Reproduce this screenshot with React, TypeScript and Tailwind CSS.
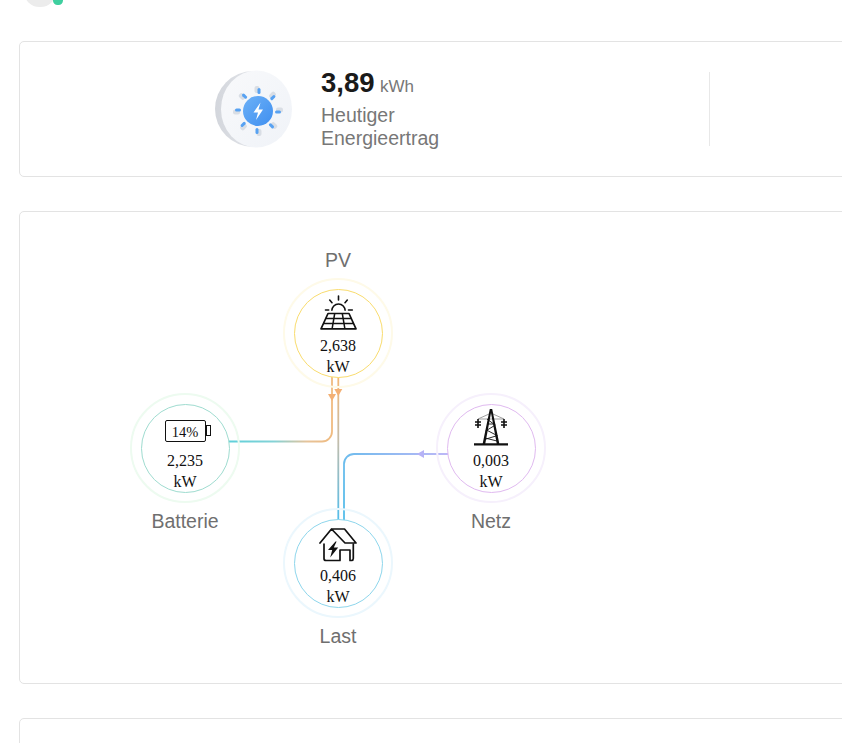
import React from "react";

function SolarIcon() {
  return (
    <svg width="37" height="35" viewBox="0 0 37 35" fill="none" stroke="#111" strokeWidth="1.6" className="block mt-[4px]">
      <path d="M18.5 1v4M9.7 5l2.3 2.7M27.3 5L25 7.7M5.5 15h3.2M28.5 15h3.8" strokeLinecap="round" />
      <path d="M11.8 15.7a6.7 6.7 0 0 1 13.4 0" />
      <path d="M8 18.5h21l7 15.3H1Z" strokeLinejoin="round" strokeWidth="1.7" />
      <path d="M5.6 23.5h25.8M3.4 28.5h30.2M14.7 18.5l-2.6 15.3M22.3 18.5l2.6 15.3" strokeWidth="1.5" />
    </svg>
  );
}

function TowerIcon() {
  return (
    <svg width="37" height="38" viewBox="0 0 37 38" fill="none" stroke="#111" className="block mt-[2px]">
      <path d="M5 11L16 6M31 11L20 6M5 11h26" strokeWidth="0.8" stroke="#888" />
      <path d="M16.8 1h2.4l7.2 35h-2.6L18 5 12.2 36H9.6Z" fill="#111" stroke="none" />
      <path d="M1 36.4h34" strokeWidth="2.4" />
      <path d="M2 14h6M28 14h6M2 17h6M28 17h6M5 11v9M31 11v9" strokeWidth="1.6" />
      <path d="M14.5 16h7.5M13.5 22l9.5 5M22.5 17l-10 6M11.5 31.5l13-4M14 11l8 6M12 30l12 3" strokeWidth="0.9" />
    </svg>
  );
}

function HouseIcon() {
  return (
    <svg width="38" height="36" viewBox="0 0 38 36" fill="none" stroke="#111" strokeWidth="1.7" strokeLinejoin="round" strokeLinecap="round" className="block mt-[6px]">
      <path d="M1 16L12.5 2H25.5L37 16H26L12.5 2" />
      <path d="M5 17V31.5a2 2 0 0 0 2 2H21V23h10v10.5h1.5a2 2 0 0 0 1.8-2V17" />
      <path d="M16.5 14.5l-7.5 8.5h4.2l-2 7.5 8-10h-4.4l2.8-6Z" fill="#111" stroke="none" />
    </svg>
  );
}

function SunDisc() {
  const angles = [0, 45, 90, 135, 180, 225, 270, 315];
  return (
    <svg width="80" height="82" viewBox="0 0 80 82" className="block">
      <defs>
        <linearGradient id="discEdge" x1="0" y1="0" x2="1" y2="0">
          <stop offset="0" stopColor="#d3d6dc" />
          <stop offset="1" stopColor="#eef0f4" />
        </linearGradient>
        <linearGradient id="disc" x1="0" y1="0" x2="1" y2="1">
          <stop offset="0" stopColor="#f8f9fb" />
          <stop offset="1" stopColor="#f0f3f8" />
        </linearGradient>
        <linearGradient id="core" x1="0" y1="0" x2="1" y2="1">
          <stop offset="0" stopColor="#6db1f7" />
          <stop offset="1" stopColor="#3f8ff0" />
        </linearGradient>
        <filter id="soft" x="-20%" y="-20%" width="140%" height="140%">
          <feGaussianBlur stdDeviation="0.5" />
        </filter>
      </defs>
      <ellipse cx="40" cy="41" rx="38" ry="38" fill="url(#discEdge)" filter="url(#soft)" />
      <ellipse cx="43.5" cy="41" rx="35.5" ry="38.5" fill="url(#disc)" filter="url(#soft)" />
      <g filter="url(#soft)">
        {angles.map((a) => (
          <g key={a} transform={`rotate(${a} 45 43)`}>
            <rect x="41.5" y="18" width="5" height="7" rx="2" fill="#d9dee5" />
            <rect x="44.5" y="20" width="3" height="6" rx="1.5" fill="#58a2f2" />
          </g>
        ))}
      </g>
      <circle cx="45" cy="43" r="15" fill="url(#core)" />
      <path d="M47.5 34.5l-7 10h4.5l-2 7.5 7-10.5h-4.5Z" fill="#fff" />
    </svg>
  );
}

function Node({ x, y, outer, inner, icon, value, label, labelTop }: {
  x: number; y: number; outer: string; inner: string; icon: React.ReactNode; value: string; label: string; labelTop?: boolean;
}) {
  return (
    <div className="absolute" style={{ left: x, top: y }}>
      <div className={`w-[110px] h-[110px] rounded-full border-[2px] flex items-center justify-center ${outer}`}>
        <div className={`w-[89px] h-[89px] rounded-full border flex flex-col items-center justify-start bg-white ${inner}`}>
          <div className="h-[47px] mt-[1px] flex items-start justify-center">{icon}</div>
          <div className="font-['Liberation_Serif',serif] text-[16px] leading-[21px] text-[#111] text-center">
            {value}
            <br />
            kW
          </div>
        </div>
      </div>
      <div className={`absolute left-0 w-[110px] text-center text-[19.5px] leading-[24px] text-[#6f6f6f] ${labelTop ? "-top-[30px]" : "top-[116px]"}`}>
        {label}
      </div>
    </div>
  );
}

export default function App() {
  return (
    <div className="relative w-[842px] h-[743px] overflow-hidden bg-white font-['Liberation_Sans',Arial,sans-serif]">
      <div className="absolute left-[24px] -top-[24px] w-[32px] h-[31px] rounded-full bg-[#ececec]" />
      <div className="absolute left-[53px] -top-[4px] w-[10px] h-[9px] rounded-full bg-[#3fcf9f]" />

      <div className="flex flex-col gap-[34px] pl-[19px] pt-[41px] w-[1100px]">
        <section className="h-[136px] rounded-[5px] border border-[#e3e3e3] flex items-center">
          <div className="w-[690px] h-[74px] border-r border-[#e8e8e8] flex items-center pl-[193px] gap-[28px]">
            <SunDisc />
            <div className="w-[130px] -mt-[1px]">
              <div className="flex items-baseline gap-[5.5px] leading-[32px]">
                <span className="text-[27.5px] font-bold text-[#1a1a1a]">3,89</span>
                <span className="text-[17px] text-[#777]">kWh</span>
              </div>
              <div className="text-[19.5px] leading-[23px] text-[#777] mt-[1px]">
                Heutiger
                <br />
                Energieertrag
              </div>
            </div>
          </div>
        </section>

        <section className="relative h-[473px] rounded-[5px] border border-[#e3e3e3]">
          <svg className="absolute left-0 top-0" width="600" height="470" fill="none">
            <defs>
              <linearGradient id="l1" gradientUnits="userSpaceOnUse" x1="320" y1="190" x2="210" y2="190">
                <stop offset="0" stopColor="#f3b877" />
                <stop offset="0.3" stopColor="#e6c39a" />
                <stop offset="0.6" stopColor="#84d2d6" />
                <stop offset="1" stopColor="#5fd0da" />
              </linearGradient>
              <linearGradient id="l2" gradientUnits="userSpaceOnUse" x1="318" y1="166" x2="318" y2="306">
                <stop offset="0" stopColor="#f3b877" />
                <stop offset="0.45" stopColor="#c4bdab" />
                <stop offset="1" stopColor="#55bdea" />
              </linearGradient>
              <linearGradient id="l3" gradientUnits="userSpaceOnUse" x1="427" y1="242" x2="324" y2="300">
                <stop offset="0" stopColor="#bdb8f7" />
                <stop offset="1" stopColor="#55bdea" />
              </linearGradient>
            </defs>
            <path d="M312 160V219.5a10 10 0 0 1-10 10H200" stroke="url(#l1)" strokeWidth="1.8" />
            <path d="M318.3 160V310" stroke="url(#l2)" strokeWidth="1.8" />
            <path d="M435 242H334a10 10 0 0 0-10 10V310" stroke="url(#l3)" strokeWidth="1.8" />
            <path d="M308 182l4 7 4-7Z" fill="#f3b074" />
            <path d="M314.3 177l4 7 4-7Z" fill="#f3b074" />
            <path d="M397 242l7-4v8Z" fill="#b6b2f6" />
          </svg>

          <Node x={263} y={66} outer="border-[#fefae8]" inner="border-[#f9dc6e]" label="PV" labelTop value="2,638" icon={<SolarIcon />} />
          <Node x={110} y={181} outer="border-[#edfbf0]" inner="border-[#9fdcd0]" label="Batterie" value="2,235"
            icon={
              <div className="relative mt-[14px]">
                <div className="w-[41px] h-[22px] rounded-[2px] border border-[#111] text-center font-['Liberation_Serif',serif] text-[14.5px] leading-[22px] text-[#111]">14%</div>
                <div className="absolute -right-[5px] top-[5px] w-[5px] h-[11px] border border-[#111]" />
              </div>
            } />
          <Node x={416} y={181} outer="border-[#f6f0fc]" inner="border-[#e0baf0]" label="Netz" value="0,003" icon={<TowerIcon />} />
          <Node x={263} y={296} outer="border-[#ebf7fd]" inner="border-[#8ed6ec]" label="Last" value="0,406" icon={<HouseIcon />} />
        </section>

        <section className="h-[200px] rounded-[5px] border border-[#e3e3e3]" />
      </div>
    </div>
  );
}
